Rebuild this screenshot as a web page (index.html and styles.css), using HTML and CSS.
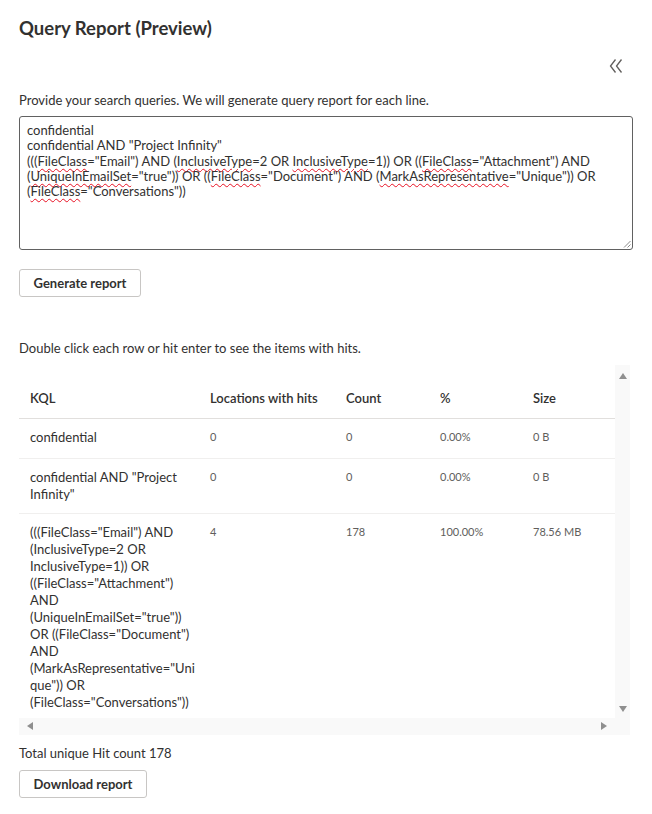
FILE: index.html
```html
<!DOCTYPE html>
<html lang="en">
<head>
<meta charset="utf-8">
<title>Query Report (Preview)</title>
<link rel="stylesheet" href="styles.css">
</head>
<body>
<div class="page">
  <h1 class="title">Query Report (Preview)</h1>
  <div class="toolbar">
    <svg class="collapse" width="16" height="16" viewBox="0 0 16 16" aria-hidden="true">
      <path d="M7.5 1.5 L2.5 8 L7.5 14.5" />
      <path d="M13.5 1.5 L8.5 8 L13.5 14.5" />
    </svg>
  </div>
  <p class="label">Provide your search queries. We will generate query report for each line.</p>
  <div class="textbox">
    <div class="tline">confidential</div>
    <div class="tline">confidential AND "Project Infinity"</div>
    <div class="tline">(((<span class="sp">FileClass</span>="Email") AND (<span class="sp">InclusiveType</span>=2 OR <span class="sp">InclusiveType</span>=1)) OR ((<span class="sp">FileClass</span>="Attachment") AND</div>
    <div class="tline">(<span class="sp">UniqueInEmailSet</span>="true")) OR ((<span class="sp">FileClass</span>="Document") AND (<span class="sp">MarkAsRepresentative</span>="Unique")) OR</div>
    <div class="tline">(<span class="sp">FileClass</span>="Conversations"))</div>
    <svg class="grip" width="8" height="8" viewBox="0 0 8 8" aria-hidden="true">
      <path d="M7.5 1 L1 7.5 M7.5 4.5 L4.5 7.5" />
    </svg>
  </div>
  <button class="btn btn-generate">Generate report</button>
  <p class="hint">Double click each row or hit enter to see the items with hits.</p>
  <div class="grid">
    <div class="viewport">
      <table class="list">
        <colgroup>
          <col class="c1"><col class="c2"><col class="c3"><col class="c4"><col class="c5">
        </colgroup>
        <thead>
          <tr><th>KQL</th><th>Locations with hits</th><th>Count</th><th>%</th><th>Size</th></tr>
        </thead>
        <tbody>
          <tr>
            <td class="kql">confidential</td><td class="num">0</td><td class="num">0</td><td class="num">0.00%</td><td class="num">0 B</td>
          </tr>
          <tr>
            <td class="kql">confidential AND "Project<br>Infinity"</td><td class="num">0</td><td class="num">0</td><td class="num">0.00%</td><td class="num">0 B</td>
          </tr>
          <tr>
            <td class="kql">(((FileClass="Email") AND<br>(InclusiveType=2 OR<br>InclusiveType=1)) OR<br>((FileClass="Attachment")<br>AND<br>(UniqueInEmailSet="true"))<br>OR ((FileClass="Document")<br>AND<br>(MarkAsRepresentative="Uni<br>que")) OR<br>(FileClass="Conversations"))</td><td class="num">4</td><td class="num">178</td><td class="num">100.00%</td><td class="num">78.56 MB</td>
          </tr>
        </tbody>
      </table>
    </div>
    <div class="vscroll">
      <span class="arr arr-up"></span>
      <span class="arr arr-down"></span>
    </div>
    <div class="hscroll">
      <span class="arr arr-left"></span>
      <span class="arr arr-right"></span>
    </div>
    <div class="corner"></div>
  </div>
  <p class="total">Total unique Hit count 178</p>
  <button class="btn btn-download">Download report</button>
</div>
</body>
</html>
```
FILE: styles.css
```css
* { box-sizing: border-box; }
html, body { margin: 0; padding: 0; background: #ffffff; }
body {
  font-family: "Segoe UI", Lato, "Noto Sans", sans-serif;
  font-size: 13px;
  color: #323130;
}
.page {
  width: 652px;
  padding: 0 19px;
}
.title {
  margin: 0;
  padding-top: 16px;
  font-size: 18.5px;
  line-height: 24px;
  font-weight: 700;
  color: #323130;
}
.toolbar {
  display: flex;
  justify-content: flex-end;
  padding-right: 9px;
  margin-top: 18px;
  height: 18px;
}
.collapse {
  fill: none;
  stroke: #605e5c;
  stroke-width: 1.3;
}
.label {
  margin: 15px 0 0;
  line-height: 18px;
}
.textbox {
  position: relative;
  margin-top: 7px;
  height: 134px;
  border: 1px solid #616161;
  border-radius: 3px;
  padding: 6px 7px;
  line-height: 15.25px;
  white-space: nowrap;
  overflow: hidden;
}
.sp {
  text-decoration: underline wavy #e81123;
  text-decoration-thickness: 1px;
  text-underline-offset: 2px;
}
.grip {
  position: absolute;
  right: 1px;
  bottom: 1px;
  fill: none;
  stroke: #8a8a8a;
  stroke-width: 1;
}
.btn {
  display: block;
  height: 28px;
  padding: 0 10px;
  border: 1px solid #c8c6c4;
  border-radius: 3px;
  background: #ffffff;
  font-family: inherit;
  font-size: 13px;
  font-weight: 700;
  color: #323130;
  white-space: nowrap;
}
.btn-generate { margin-top: 19px; width: 122px; }
.btn-download { margin-top: 8px; width: 128px; }
.hint {
  margin: 42px 0 0;
  line-height: 18px;
}
.grid {
  display: grid;
  grid-template-columns: 596px 15px;
  grid-template-rows: 353px 17px;
  margin-top: 8px;
  width: 611px;
}
.viewport {
  overflow: hidden;
  padding-top: 13px;
}
.list {
  border-collapse: collapse;
  table-layout: fixed;
  width: 680px;
}
.c1 { width: 180px; }
.c2 { width: 136px; }
.c3 { width: 94px; }
.c4 { width: 93px; }
.c5 { width: 177px; }
.list th {
  height: 40px;
  padding: 0 11px;
  text-align: left;
  font-weight: 600;
  font-size: 13px;
  color: #323130;
  border-bottom: 1px solid #e1dfdd;
}
.list tbody tr { height: 40px; }
.list td {
  vertical-align: top;
  padding: 10px 11px;
  border-bottom: 1px solid #f0efee;
  white-space: nowrap;
}
.list .kql {
  line-height: 17px;
  color: #323130;
}
.list .num {
  font-size: 11px;
  line-height: 14px;
  color: #605e5c;
  padding-top: 11px;
}
.vscroll, .hscroll, .corner {
  position: relative;
  background: #f9f9f9;
}
.arr {
  position: absolute;
  width: 0;
  height: 0;
  border-style: solid;
  border-color: transparent;
}
.arr-up {
  top: 8px;
  left: 4px;
  border-width: 0 4px 6px 4px;
  border-bottom-color: #8f8f8f;
}
.arr-down {
  bottom: 6px;
  left: 4px;
  border-width: 6px 4px 0 4px;
  border-top-color: #8f8f8f;
}
.arr-left {
  top: 4px;
  left: 8px;
  border-width: 4px 6px 4px 0;
  border-right-color: #8f8f8f;
}
.arr-right {
  top: 4px;
  right: 8px;
  border-width: 4px 0 4px 6px;
  border-left-color: #8f8f8f;
}
.total {
  margin: 9px 0 0;
  line-height: 18px;
}
```
